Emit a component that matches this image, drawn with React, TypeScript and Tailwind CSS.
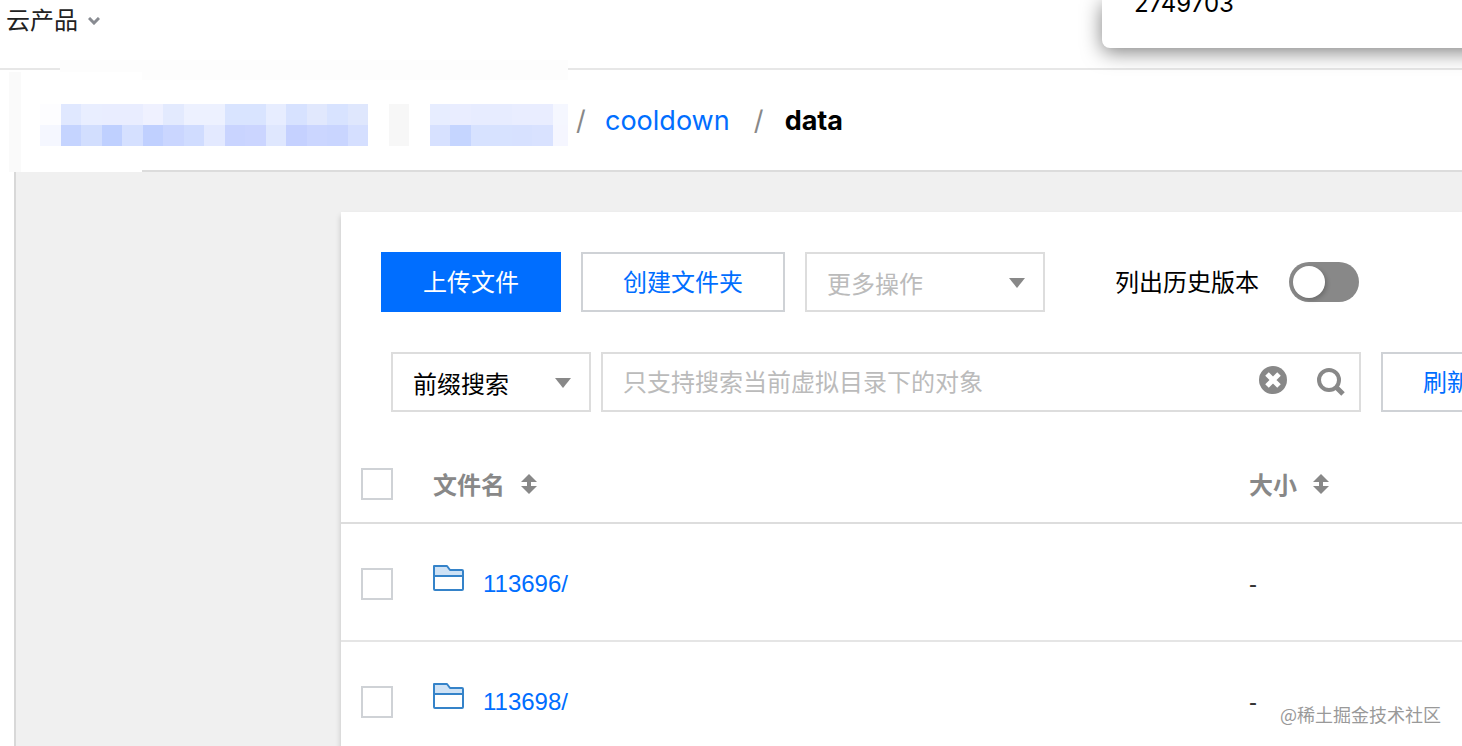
import { useState } from "react";

const maskedCells = [
  ["#fdfdff", "#f5f7ff"],
  ["#e0e8ff", "#c5d4ff"],
  ["#e9eeff", "#d2defe"],
  ["#e9edff", "#bfd0ff"],
  ["#e9edff", "#d5e0ff"],
  ["#eff1ff", "#c0d0ff"],
  ["#e3eafe", "#cad6ff"],
  ["#edf1ff", "#d0dcff"],
  ["#edf1ff", "#e3e9ff"],
  ["#d9e4ff", "#c9d4ff"],
  ["#d9e4ff", "#cbd5ff"],
  ["#e7edff", "#dfe7fe"],
  ["#d7e2ff", "#c5d1ff"],
  ["#e1e8fd", "#cbd6ff"],
  ["#d8e3ff", "#c9d5ff"],
  ["#dfe7fd", "#d5dfff"],
  ["#ffffff", "#ffffff"],
  ["#f7f7f7", "#f7f7f7"],
  ["#ffffff", "#ffffff"],
  ["#e7edff", "#d7e1ff"],
  ["#e9edff", "#c5d5ff"],
  ["#e7ecff", "#d7e2ff"],
  ["#e7ecff", "#d7e2ff"],
  ["#e9edff", "#d7e1ff"],
  ["#e9edff", "#d9e2ff"],
  ["#f5f7ff", "#f5f6ff"],
];

const files = [{ name: "113696/" }, { name: "113698/" }];

function MaskedPath() {
  return (
    <svg
      className="mt-[10px] h-[42px] w-[528px] shrink-0"
      viewBox="0 0 25.75 2"
      preserveAspectRatio="none"
      shapeRendering="crispEdges"
      aria-hidden="true"
    >
      {maskedCells.map(([top, bottom], i) => (
        <g key={i}>
          <rect x={i} y="0" width="1" height="1" fill={top} />
          <rect x={i} y="1" width="1" height="1" fill={bottom} />
        </g>
      ))}
    </svg>
  );
}

function Caret() {
  return (
    <svg className="pointer-events-none absolute top-[26px] right-5 h-[10px] w-4" viewBox="0 0 16 10" aria-hidden="true">
      <path d="M0 0h16L8 10z" fill="#888" />
    </svg>
  );
}

function SortIcon() {
  return (
    <svg className="h-5 w-4" viewBox="0 0 16 20" fill="#888" aria-hidden="true">
      <path d="M8 0l8 8h-6v4h6l-8 8-8-8h6V8H0z" />
    </svg>
  );
}

function FolderIcon() {
  return (
    <svg className="h-7 w-8" viewBox="0 0 32 28" aria-hidden="true">
      <path d="M1 12V2h13l3 4h13v6z" fill="#cfe2f5" />
      <path
        d="M1 2h13l3 4h12q1 0 1 1v18q0 1-1 1H2q-1 0-1-1zM1 12h29"
        fill="none"
        stroke="#3583c9"
        strokeWidth="2"
        strokeLinejoin="round"
      />
    </svg>
  );
}

function Checkbox({ label }: { label: string }) {
  return (
    <input
      type="checkbox"
      aria-label={label}
      className="block size-8 appearance-none border-2 border-[#cfd2d6] bg-white checked:bg-[#006eff]"
    />
  );
}

export default function App() {
  const [keyword, setKeyword] = useState("");
  const [history, setHistory] = useState(false);

  return (
    <div className="relative flex h-screen flex-col overflow-hidden bg-white font-['Liberation_Sans','Noto_Sans_CJK_SC',sans-serif] text-2xl text-black">
      <header className="h-[70px] shrink-0 border-b-2 border-[#e7e7e7] px-[6px]">
        <button className="flex h-10 items-center gap-[10px] pt-[2px] text-[#222]">
          云产品
          <svg className="h-2 w-3" viewBox="0 0 12 8" aria-hidden="true">
            <path d="M1 1l5 5 5-5" fill="none" stroke="#888b91" strokeWidth="3" />
          </svg>
        </button>
      </header>

      {/* Account popover */}
      <div className="absolute top-0 -right-10 h-12 w-[400px] rounded-bl-lg bg-white px-8 font-[Inter,sans-serif] shadow-[0_4px_20px_rgba(0,0,0,0.5)]">
        <p className="-mt-3 leading-8">2749703</p>
      </div>

      <nav className="relative flex h-[102px] shrink-0 items-center border-b-2 border-[#dcdcdc] pl-10 font-[Inter,sans-serif] text-[27px]">
        <div className="absolute -top-[10px] left-[60px] h-5 w-[508px] bg-[#fdfdfd]"></div>
        <div className="absolute top-[2px] left-0 h-[100px] w-[142px] bg-white pl-[9px]">
          <div className="h-full w-3 bg-[#fafafa]"></div>
        </div>
        <div className="relative flex items-center">
          <MaskedPath />
          <span className="w-[37px] pt-[2px] pl-2 text-[#888]">/</span>
          <a href="#cooldown" className="pt-[2px] text-[#006eff]">cooldown</a>
          <span className="w-[55px] pt-[2px] pl-6 text-[#888]">/</span>
          <span className="pt-[2px] font-bold">data</span>
        </div>
      </nav>

      <div className="ml-[14px] flex min-h-0 flex-1 border-l-2 border-[#d8d8d8] bg-[#f0f0f0] pt-10">
        <div className="w-[325px] shrink-0"></div>
        <main className="min-w-0 flex-1 overflow-x-clip bg-white pt-10 shadow-[0_4px_6px_rgba(0,0,0,0.2)]">
          <div className="flex items-center gap-5 pl-10">
            <button className="h-[60px] w-[180px] shrink-0 bg-[#006eff] pt-[2px] text-white">上传文件</button>
            <button className="h-[60px] w-[204px] shrink-0 border-2 border-[#cfd2d6] pt-[2px] text-[#006eff]">创建文件夹</button>
            <div className="relative shrink-0">
              <select
                aria-label="更多操作"
                className="block h-[60px] w-60 appearance-none border-2 border-[#ddd] bg-white px-5 pt-[6px] text-[#bbb]"
              >
                <option>更多操作</option>
              </select>
              <Caret />
            </div>
            <label className="flex shrink-0 items-center gap-[30px] pl-[50px]">
              <span className="pt-[2px]">列出历史版本</span>
              <span className="relative h-10 w-[70px]">
                <input
                  type="checkbox"
                  role="switch"
                  checked={history}
                  onChange={(e) => setHistory(e.target.checked)}
                  className="peer block h-10 w-[70px] appearance-none rounded-full bg-[#888] checked:bg-[#006eff]"
                />
                <span className="pointer-events-none absolute top-1 left-1 size-8 rounded-full bg-white shadow-[2px_2px_4px_rgba(0,0,0,0.2)] peer-checked:left-[34px]"></span>
              </span>
            </label>
          </div>

          <div className="mt-10 flex pl-[50px]">
            <div className="relative shrink-0">
              <select
                aria-label="搜索方式"
                className="block h-[60px] w-[200px] appearance-none border-2 border-[#ddd] bg-white px-5 pt-[6px]"
              >
                <option>前缀搜索</option>
              </select>
              <Caret />
            </div>
            <div className="ml-[10px] flex h-[60px] w-[760px] shrink-0 items-center border-2 border-[#ddd] pr-[14px] pl-5">
              <input
                type="text"
                aria-label="搜索"
                placeholder="只支持搜索当前虚拟目录下的对象"
                value={keyword}
                onChange={(e) => setKeyword(e.target.value)}
                className="min-w-0 flex-1 pt-[2px] outline-none placeholder:text-[#bbb]"
              />
              <button aria-label="清除" className="pb-1" onClick={() => setKeyword("")}>
                <svg className="size-7" viewBox="0 0 28 28" aria-hidden="true">
                  <circle cx="14" cy="14" r="14" fill="#888" />
                  <path d="M8 8l12 12M20 8L8 20" stroke="#fff" strokeWidth="5" />
                </svg>
              </button>
              <button aria-label="搜索" className="ml-[30px]">
                <svg className="size-7" viewBox="0 0 28 28" fill="none" stroke="#888" aria-hidden="true">
                  <circle cx="12" cy="12" r="10" strokeWidth="4" />
                  <path d="M19 19l7 7" strokeWidth="5" />
                </svg>
              </button>
            </div>
            <button className="ml-5 h-[60px] w-[132px] shrink-0 border-2 border-[#cfd2d6] pt-[2px] text-[#006eff]">刷新</button>
          </div>

          <table className="mt-[33px] w-full min-w-[1120px] table-fixed text-left">
            <thead>
              <tr className="h-[78px] border-b-2 border-[#ddd] text-[#888]">
                <th className="w-[92px] pl-5">
                  <Checkbox label="全选" />
                </th>
                <th className="w-[816px]">
                  <span className="flex items-center gap-4"><span className="pt-1">文件名</span> <SortIcon /></span>
                </th>
                <th>
                  <span className="flex items-center gap-4"><span className="pt-1">大小</span> <SortIcon /></span>
                </th>
              </tr>
            </thead>
            <tbody>
              {files.map((file) => (
                <tr key={file.name} className="h-[118px] border-b-2 border-[#e5e5e5]">
                  <td className="pt-1 pl-5">
                    <Checkbox label={file.name} />
                  </td>
                  <td className="pt-1">
                    <a href="#folder" className="flex items-center gap-[18px] text-[#006eff]">
                      <span className="pb-3"><FolderIcon /></span>
                      {file.name}
                    </a>
                  </td>
                  <td className="pt-1 text-[#333]">-</td>
                </tr>
              ))}
            </tbody>
          </table>
        </main>
      </div>

      <p className="absolute right-[21px] bottom-[18px] font-['Noto_Sans_CJK_SC',sans-serif] text-lg leading-7 text-[#999]">
        @稀土掘金技术社区
      </p>
    </div>
  );
}
